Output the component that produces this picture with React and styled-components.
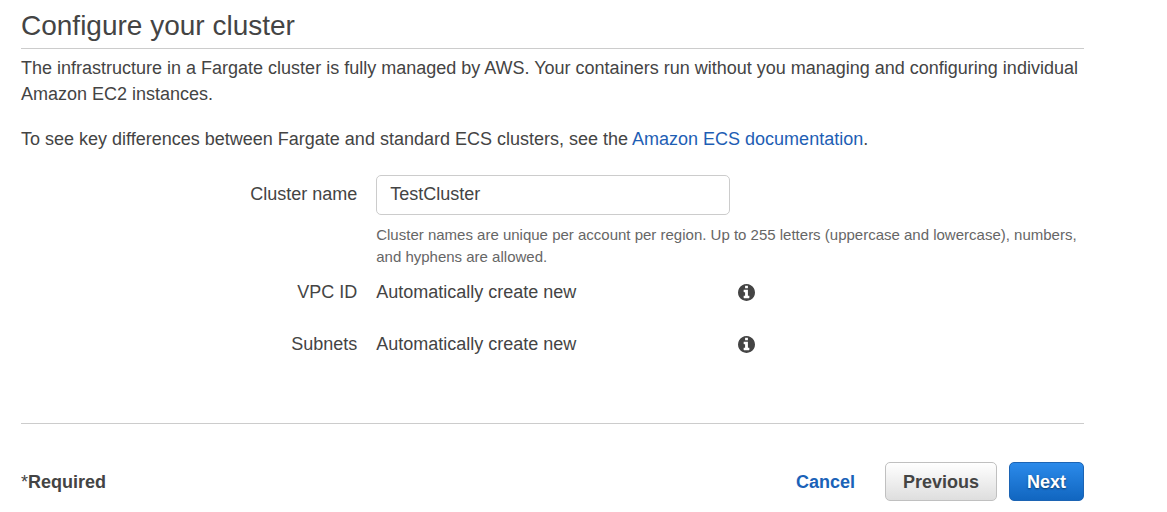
import React from "react";
import styled, { createGlobalStyle, css } from "styled-components";

const GlobalStyle = createGlobalStyle`
  *, *::before, *::after { box-sizing: border-box; }
  body {
    margin: 0;
    background: #fff;
    color: #444;
    font-family: "Liberation Sans", Arial, Helvetica, sans-serif;
    font-size: 18px;
    line-height: 26px;
  }
`;

const Page = styled.main`
  margin: 0 83px 0 21px;
  padding: 8px 0 11px;
`;

const Title = styled.h1`
  margin: 0 0 6px;
  padding-bottom: 4px;
  border-bottom: 1px solid #ccc;
  font-size: 28px;
  font-weight: 400;
  line-height: 36px;
`;

const Paragraph = styled.p`
  margin: 0 0 19px;
`;

const Link = styled.a`
  color: #1e5eb4;
  text-decoration: none;
  &:hover { text-decoration: underline; }
`;

const Form = styled.form`
  margin-top: 23px;
`;

const FormRow = styled.div`
  display: grid;
  grid-template-columns: minmax(0, 19fr) minmax(0, 40fr);
  column-gap: 19px;
  margin-bottom: ${(p) => (p.$compact ? 4 : 12)}px;
`;

const Label = styled.label`
  padding: 6px 0;
  text-align: right;
`;

const Term = styled.span`
  padding: 7px 0;
  text-align: right;
`;

const Field = styled.div`
  display: flex;
  align-items: center;
  gap: 8px;
`;

const TextInput = styled.input`
  display: block;
  width: 50%;
  height: 40px;
  padding: 0 13px 2px;
  border: 1px solid #ccc;
  border-radius: 5px;
  background: #fff;
  color: #444;
  font: inherit;
`;

const Value = styled.span`
  width: 50%;
`;

const Help = styled.p`
  margin: 9px 0 0;
  color: #666;
  font-size: 15px;
  line-height: 22px;
`;

const InfoButton = styled.button`
  display: flex;
  padding: 0;
  border: 0;
  background: none;
  color: #444;
  cursor: pointer;
`;

const Footer = styled.footer`
  display: flex;
  align-items: center;
  margin-top: 59px;
  padding-top: 38px;
  border-top: 1px solid #ccc;
  font-weight: 700;
`;

const Required = styled.span`
  margin-right: auto;
`;

const Asterisk = styled.span`
  font-weight: 400;
`;

const Actions = styled.div`
  display: flex;
  align-items: center;
  gap: 12px;
`;

const variants = {
  link: css`
    border-color: transparent;
    background: none;
    color: #1a62b8;
  `,
  normal: css`
    border-color: #c0c0c0;
    background: linear-gradient(#fff, #dedede);
    color: #444;
  `,
  primary: css`
    border-color: #1c64b4;
    background: linear-gradient(#2b8aea, #1166c0);
    color: #fff;
    text-shadow: 0 1px 2px rgba(0, 0, 0, 0.5);
  `,
};

const Button = styled.button`
  height: 39px;
  padding: 0 17px;
  border: 1px solid;
  border-radius: 5px;
  font: inherit;
  cursor: pointer;
  ${(p) => variants[p.$variant]}
`;

function Info({ label }) {
  return (
    <InfoButton type="button" aria-label={label}>
      <svg width="17" height="17" viewBox="128 128 1536 1536" fill="currentColor" aria-hidden="true">
        <path d="M1152 1376v-160q0-14-9-23t-23-9h-96v-512q0-14-9-23t-23-9h-320q-14 0-23 9t-9 23v160q0 14 9 23t23 9h96v320h-96q-14 0-23 9t-9 23v160q0 14 9 23t23 9h448q14 0 23-9t9-23zm-128-896v-160q0-14-9-23t-23-9h-192q-14 0-23 9t-9 23v160q0 14 9 23t23 9h192q14 0 23-9t9-23zm640 416q0 209-103 385.5t-279.5 279.5-385.5 103-385.5-103-279.5-279.5-103-385.5 103-385.5 279.5-279.5 385.5-103 385.5 103 279.5 279.5 103 385.5z" />
      </svg>
    </InfoButton>
  );
}

function ReadOnlyRow({ name, value }) {
  return (
    <FormRow>
      <Term>{name}</Term>
      <Field>
        <Value>{value}</Value>
        <Info label={`About ${name}`} />
      </Field>
    </FormRow>
  );
}

export default function App() {
  return (
    <>
      <GlobalStyle />
      <Page>
        <Title>Configure your cluster</Title>
        <Paragraph>
          The infrastructure in a Fargate cluster is fully managed by AWS. Your containers run
          without you managing and configuring individual Amazon EC2 instances.
        </Paragraph>
        <Paragraph>
          To see key differences between Fargate and standard ECS clusters, see the{" "}
          <Link href="#documentation">Amazon ECS documentation</Link>.
        </Paragraph>
        <Form onSubmit={(e) => e.preventDefault()}>
          <FormRow $compact>
            <Label htmlFor="cluster-name">Cluster name</Label>
            <div>
              <TextInput
                id="cluster-name"
                type="text"
                defaultValue="TestCluster"
                aria-describedby="cluster-name-help"
              />
              <Help id="cluster-name-help">
                Cluster names are unique per account per region. Up to 255 letters (uppercase and
                lowercase), numbers, and hyphens are allowed.
              </Help>
            </div>
          </FormRow>
          <ReadOnlyRow name="VPC ID" value="Automatically create new" />
          <ReadOnlyRow name="Subnets" value="Automatically create new" />
          <Footer>
            <Required>
              <Asterisk>*</Asterisk>Required
            </Required>
            <Actions>
              <Button type="button" $variant="link">Cancel</Button>
              <Button type="button" $variant="normal">Previous</Button>
              <Button type="submit" $variant="primary">Next</Button>
            </Actions>
          </Footer>
        </Form>
      </Page>
    </>
  );
}
